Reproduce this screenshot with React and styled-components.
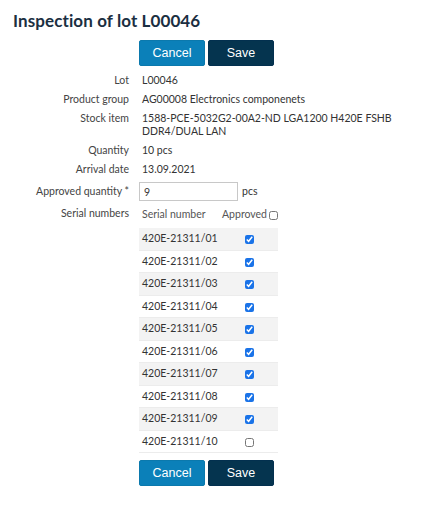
import React, { useState } from "react";
import styled, { createGlobalStyle } from "styled-components";

const GlobalStyle = createGlobalStyle`
  body {
    margin: 0;
    background: #fff;
    font-family: Lato, "Noto Sans", sans-serif;
    color: #333;
  }
`;

const Page = styled.div`
  padding: 10px 13px 20px;
`;

const Title = styled.h1`
  margin: 0 0 9px;
  font-size: 17px;
  font-weight: 700;
  color: #1b2f42;
  letter-spacing: 0.1px;
`;

const ButtonRow = styled.div`
  display: flex;
  gap: 3px;
  margin-left: ${(p) => p.$offset ?? 126}px;
`;

const Button = styled.button`
  width: 66px;
  height: 26px;
  border: 1px solid ${(p) => (p.$primary ? "#03304f" : "#0b79ad")};
  border-radius: 2px;
  background: ${(p) => (p.$primary ? "#05344f" : "#0b80b9")};
  color: #fff;
  font-family: "Liberation Sans", Arial, sans-serif;
  font-size: 12.5px;
  padding: 0;
  cursor: pointer;
`;

const Form = styled.div`
  display: grid;
  grid-template-columns: 116px 290px;
  column-gap: 13px;
  row-gap: 6px;
  margin-top: 8px;
  font-size: 10.5px;
  line-height: 13px;
`;

const Label = styled.div`
  text-align: right;
  color: #444;
  padding-top: ${(p) => p.$pt || 0}px;
`;

const Value = styled.div`
  color: #333;
`;

const InputRow = styled.div`
  display: flex;
  align-items: center;
  gap: 4px;
  margin-left: -3px;
`;

const Input = styled.input`
  width: 99px;
  height: 19px;
  box-sizing: border-box;
  border: 1px solid #c8c8c8;
  padding: 0 4px;
  font-family: inherit;
  font-size: 10.5px;
  color: #333;
`;

const Table = styled.table`
  margin-left: -3px;
  margin-top: 1px;
  border-collapse: collapse;
  width: 139px;
  font-size: 10.5px;
`;

const Th = styled.th`
  font-weight: 400;
  color: #555;
  text-align: ${(p) => p.$align || "left"};
  padding: 0 0 7px 3px;
  height: 13px;
  white-space: nowrap;
`;

const Tr = styled.tr`
  background: ${(p) => (p.$odd ? "#f3f3f3" : "#fff")};
  border-bottom: 1px solid #ececec;
`;

const Td = styled.td`
  height: 21.5px;
  padding: 0 0 0 3px;
  text-align: ${(p) => p.$align || "left"};
  color: #333;
  white-space: nowrap;
`;

const Check = styled.input`
  width: 9px;
  height: 9px;
  margin: 0;
  vertical-align: middle;
  accent-color: #1a73e8;
`;

const HeadCheck = styled(Check)`
  margin-left: 2px;
`;

const Bottom = styled.div`
  margin-top: 7px;
`;

const initial = Array.from({ length: 10 }, (_, i) => ({
  serial: `420E-21311/${String(i + 1).padStart(2, "0")}`,
  approved: i < 9,
}));

export default function App() {
  const [rows, setRows] = useState(initial);
  const [qty, setQty] = useState("9");

  const toggle = (idx) =>
    setRows((prev) =>
      prev.map((r, i) => (i === idx ? { ...r, approved: !r.approved } : r))
    );

  return (
    <Page>
      <GlobalStyle />
      <Title>Inspection of lot L00046</Title>
      <ButtonRow>
        <Button>Cancel</Button>
        <Button $primary>Save</Button>
      </ButtonRow>
      <Form>
        <Label>Lot</Label>
        <Value>L00046</Value>
        <Label>Product group</Label>
        <Value>AG00008 Electronics componenets</Value>
        <Label>Stock item</Label>
        <Value>
          1588-PCE-5032G2-00A2-ND LGA1200 H420E FSHB
          <br />
          DDR4/DUAL LAN
        </Value>
        <Label>Quantity</Label>
        <Value>10 pcs</Value>
        <Label>Arrival date</Label>
        <Value>13.09.2021</Value>
        <Label $pt={3}>Approved quantity *</Label>
        <InputRow>
          <Input value={qty} onChange={(e) => setQty(e.target.value)} />
          <span>pcs</span>
        </InputRow>
        <Label>Serial numbers</Label>
        <div>
          <Table>
            <thead>
              <tr>
                <Th>Serial number</Th>
                <Th $align="right">
                  Approved
                  <HeadCheck type="checkbox" />
                </Th>
              </tr>
            </thead>
            <tbody>
              {rows.map((r, i) => (
                <Tr key={r.serial} $odd={i % 2 === 0}>
                  <Td>{r.serial}</Td>
                  <Td $align="center">
                    <Check
                      type="checkbox"
                      checked={r.approved}
                      onChange={() => toggle(i)}
                    />
                  </Td>
                </Tr>
              ))}
            </tbody>
          </Table>
          <Bottom>
            <ButtonRow $offset={-3}>
              <Button>Cancel</Button>
              <Button $primary>Save</Button>
            </ButtonRow>
          </Bottom>
        </div>
      </Form>
    </Page>
  );
}
